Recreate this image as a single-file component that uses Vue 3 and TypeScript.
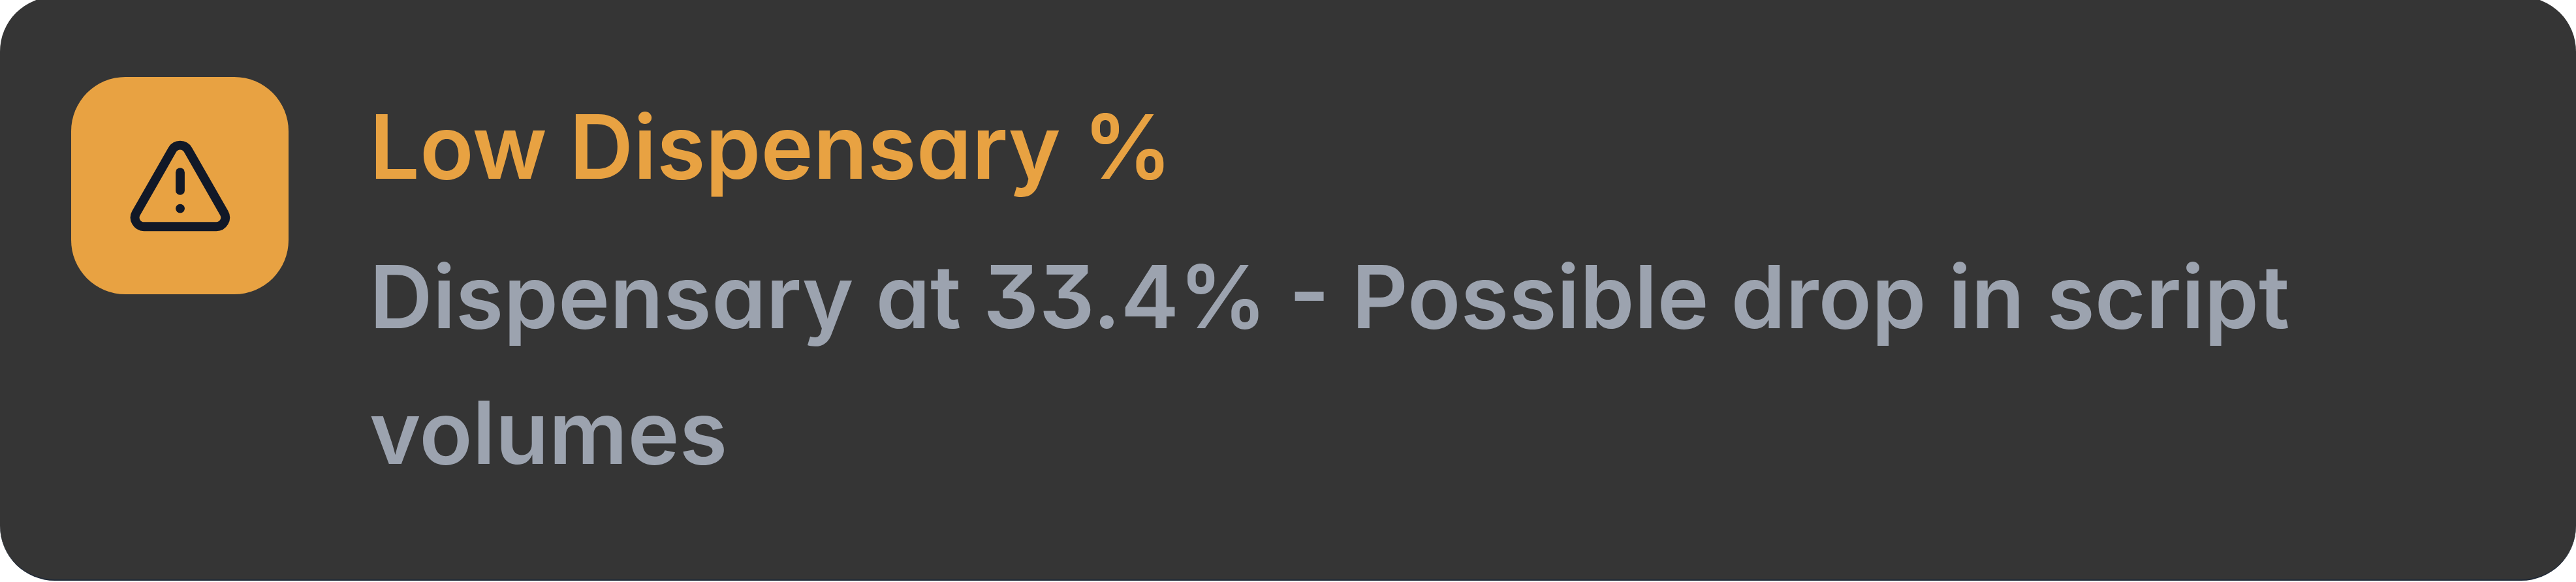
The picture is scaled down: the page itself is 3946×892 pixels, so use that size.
<script setup lang="ts">
interface Alert {
  title: string
  message: string
}

const alert: Alert = {
  title: 'Low Dispensary %',
  message: 'Dispensary at 33.4% - Possible drop in script volumes',
}
</script>

<template>
  <section class="alert" role="alert">
    <div class="badge">
      <svg class="icon" viewBox="0 0 24 24" aria-hidden="true">
        <path d="m21.73 18-8-14a2 2 0 0 0-3.48 0l-8 14A2 2 0 0 0 4 21h16a2 2 0 0 0 1.73-3Z" />
        <path d="M12 9v4" />
        <path d="M12 17h.01" />
      </svg>
    </div>
    <div class="content">
      <h2 class="title">{{ alert.title }}</h2>
      <p class="message">{{ alert.message }}</p>
    </div>
  </section>
</template>

<style>
body {
  margin: 0;
  background: #fff;
}
</style>

<style scoped>
.alert {
  display: flex;
  align-items: flex-start;
  gap: 124px;
  box-sizing: border-box;
  margin-top: -5px;
  padding: 123px 109px 122px;
  border-bottom: 2px solid #1f2937;
  border-radius: 84px;
  background: #353535;
  font-family: Inter, "Open Sans", sans-serif;
  /* single-storey a, flat-top 3 */
  font-feature-settings: "cv11", "cv09";
}

.badge {
  display: flex;
  flex: none;
  align-items: center;
  justify-content: center;
  width: 333px;
  height: 333px;
  border-radius: 83px;
  background: #e8a242;
}

.icon {
  width: 166px;
  height: 166px;
  fill: none;
  stroke: #111827;
  stroke-width: 2;
  stroke-linecap: round;
  stroke-linejoin: round;
}

.content {
  flex: 1;
  min-width: 0;
  padding-top: 3px;
}

.title,
.message {
  margin: 0;
  line-height: 208px;
  font-weight: 600;
}

.title {
  margin-bottom: 21px;
  color: #e8a242;
  font-size: 136px;
}

.message {
  color: #9ca3af;
  font-size: 134px;
}
</style>
